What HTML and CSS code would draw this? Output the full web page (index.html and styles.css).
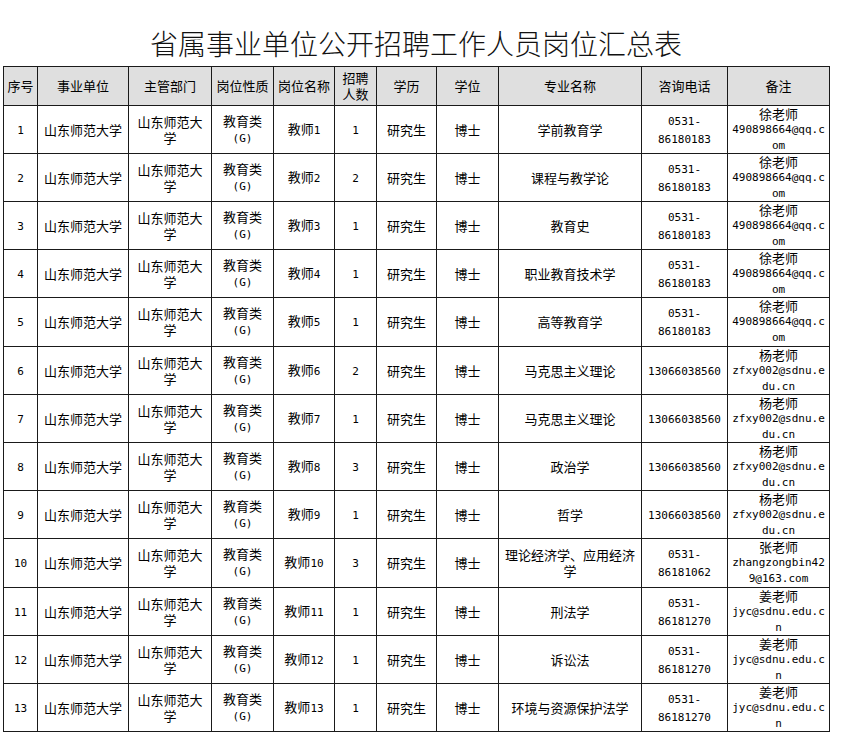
FILE: index.html
```html
<!DOCTYPE html>
<html lang="zh-CN">
<head>
<meta charset="utf-8">
<title>省属事业单位公开招聘工作人员岗位汇总表</title>
<link rel="stylesheet" href="styles.css">
</head>
<body>
<div class="page">
  <h1 class="title">省属事业单位公开招聘工作人员岗位汇总表</h1>
  <table class="sheet">
    <colgroup>
      <col class="c1"><col class="c2"><col class="c3"><col class="c4"><col class="c5"><col class="c6"><col class="c7"><col class="c8"><col class="c9"><col class="c10"><col class="c11">
    </colgroup>
    <thead>
      <tr class="head">
        <th>序号</th><th>事业单位</th><th>主管部门</th><th>岗位性质</th><th>岗位名称</th><th>招聘人数</th><th>学历</th><th>学位</th><th>专业名称</th><th>咨询电话</th><th>备注</th>
      </tr>
    </thead>
    <tbody>
      <tr><td><span class="lat">1</span></td><td>山东师范大学</td><td>山东师范大学</td><td>教育类<span class="lat">(G)</span></td><td>教师<span class="lat">1</span></td><td><span class="lat">1</span></td><td>研究生</td><td>博士</td><td>学前教育学</td><td><span class="lat">0531-86180183</span></td><td class="note"><div class="box">徐老师<span class="lat">490898664@qq.com</span></div></td></tr>
      <tr><td><span class="lat">2</span></td><td>山东师范大学</td><td>山东师范大学</td><td>教育类<span class="lat">(G)</span></td><td>教师<span class="lat">2</span></td><td><span class="lat">2</span></td><td>研究生</td><td>博士</td><td>课程与教学论</td><td><span class="lat">0531-86180183</span></td><td class="note"><div class="box">徐老师<span class="lat">490898664@qq.com</span></div></td></tr>
      <tr><td><span class="lat">3</span></td><td>山东师范大学</td><td>山东师范大学</td><td>教育类<span class="lat">(G)</span></td><td>教师<span class="lat">3</span></td><td><span class="lat">1</span></td><td>研究生</td><td>博士</td><td>教育史</td><td><span class="lat">0531-86180183</span></td><td class="note"><div class="box">徐老师<span class="lat">490898664@qq.com</span></div></td></tr>
      <tr><td><span class="lat">4</span></td><td>山东师范大学</td><td>山东师范大学</td><td>教育类<span class="lat">(G)</span></td><td>教师<span class="lat">4</span></td><td><span class="lat">1</span></td><td>研究生</td><td>博士</td><td>职业教育技术学</td><td><span class="lat">0531-86180183</span></td><td class="note"><div class="box">徐老师<span class="lat">490898664@qq.com</span></div></td></tr>
      <tr class="tall"><td><span class="lat">5</span></td><td>山东师范大学</td><td>山东师范大学</td><td>教育类<span class="lat">(G)</span></td><td>教师<span class="lat">5</span></td><td><span class="lat">1</span></td><td>研究生</td><td>博士</td><td>高等教育学</td><td><span class="lat">0531-86180183</span></td><td class="note"><div class="box">徐老师<span class="lat">490898664@qq.com</span></div></td></tr>
      <tr><td><span class="lat">6</span></td><td>山东师范大学</td><td>山东师范大学</td><td>教育类<span class="lat">(G)</span></td><td>教师<span class="lat">6</span></td><td><span class="lat">2</span></td><td>研究生</td><td>博士</td><td>马克思主义理论</td><td><span class="lat">13066038560</span></td><td class="note"><div class="box">杨老师<span class="lat">zfxy002@sdnu.edu.cn</span></div></td></tr>
      <tr><td><span class="lat">7</span></td><td>山东师范大学</td><td>山东师范大学</td><td>教育类<span class="lat">(G)</span></td><td>教师<span class="lat">7</span></td><td><span class="lat">1</span></td><td>研究生</td><td>博士</td><td>马克思主义理论</td><td><span class="lat">13066038560</span></td><td class="note"><div class="box">杨老师<span class="lat">zfxy002@sdnu.edu.cn</span></div></td></tr>
      <tr><td><span class="lat">8</span></td><td>山东师范大学</td><td>山东师范大学</td><td>教育类<span class="lat">(G)</span></td><td>教师<span class="lat">8</span></td><td><span class="lat">3</span></td><td>研究生</td><td>博士</td><td>政治学</td><td><span class="lat">13066038560</span></td><td class="note"><div class="box">杨老师<span class="lat">zfxy002@sdnu.edu.cn</span></div></td></tr>
      <tr><td><span class="lat">9</span></td><td>山东师范大学</td><td>山东师范大学</td><td>教育类<span class="lat">(G)</span></td><td>教师<span class="lat">9</span></td><td><span class="lat">1</span></td><td>研究生</td><td>博士</td><td>哲学</td><td><span class="lat">13066038560</span></td><td class="note"><div class="box">杨老师<span class="lat">zfxy002@sdnu.edu.cn</span></div></td></tr>
      <tr class="tall"><td><span class="lat">10</span></td><td>山东师范大学</td><td>山东师范大学</td><td>教育类<span class="lat">(G)</span></td><td>教师<span class="lat">10</span></td><td><span class="lat">3</span></td><td>研究生</td><td>博士</td><td>理论经济学、应用经济学</td><td><span class="lat">0531-86181062</span></td><td class="note"><div class="box">张老师<span class="lat">zhangzongbin429@163.com</span></div></td></tr>
      <tr><td><span class="lat">11</span></td><td>山东师范大学</td><td>山东师范大学</td><td>教育类<span class="lat">(G)</span></td><td>教师<span class="lat">11</span></td><td><span class="lat">1</span></td><td>研究生</td><td>博士</td><td>刑法学</td><td><span class="lat">0531-86181270</span></td><td class="note"><div class="box">姜老师<span class="lat">jyc@sdnu.edu.cn</span></div></td></tr>
      <tr><td><span class="lat">12</span></td><td>山东师范大学</td><td>山东师范大学</td><td>教育类<span class="lat">(G)</span></td><td>教师<span class="lat">12</span></td><td><span class="lat">1</span></td><td>研究生</td><td>博士</td><td>诉讼法</td><td><span class="lat">0531-86181270</span></td><td class="note"><div class="box">姜老师<span class="lat">jyc@sdnu.edu.cn</span></div></td></tr>
      <tr><td><span class="lat">13</span></td><td>山东师范大学</td><td>山东师范大学</td><td>教育类<span class="lat">(G)</span></td><td>教师<span class="lat">13</span></td><td><span class="lat">1</span></td><td>研究生</td><td>博士</td><td>环境与资源保护法学</td><td><span class="lat">0531-86181270</span></td><td class="note"><div class="box">姜老师<span class="lat">jyc@sdnu.edu.cn</span></div></td></tr>
    </tbody>
  </table>
</div>
</body>
</html>
```

FILE: styles.css
```css
html, body {
  margin: 0;
  padding: 0;
  background: #ffffff;
}

.page {
  padding: 0 3px;
  width: 826px;
  font-family: "Noto Sans CJK SC", "Noto Sans", sans-serif;
  color: #000;
}

.title {
  margin: 0;
  padding-top: 20px;
  height: 46px;
  line-height: 46px;
  font-size: 28px;
  font-weight: 300;
  text-align: center;
  color: #111;
  white-space: nowrap;
}

.sheet {
  width: 826px;
  table-layout: fixed;
  border-collapse: collapse;
  font-size: 13px;
  line-height: 16px;
}

.c1 { width: 34px; }
.c2 { width: 91px; }
.c3 { width: 83px; }
.c4 { width: 62px; }
.c5 { width: 61px; }
.c6 { width: 42px; }
.c7 { width: 60px; }
.c8 { width: 62px; }
.c9 { width: 143px; }
.c10 { width: 86px; }
.c11 { width: 102px; }

.sheet th,
.sheet td {
  border: 1px solid #1a1a1a;
  padding: 0 3px;
  text-align: center;
  vertical-align: middle;
  font-weight: 400;
  overflow: visible;
}

.head {
  height: 39px;
  background: #dfdfdf;
}

.sheet tbody tr {
  height: 48px;
}

.sheet tbody tr.tall {
  height: 49px;
}

.lat {
  font-family: "DejaVu Sans Mono", "Liberation Mono", monospace;
  font-size: 11px;
}

.note {
  padding: 0 2px;
}

.note .box {
  height: 46px;
  display: flex;
  flex-direction: column;
  justify-content: center;
  align-items: center;
  line-height: 16px;
}

.note .lat {
  display: block;
  width: 100%;
  word-break: break-all;
  line-height: 16px;
}
```
